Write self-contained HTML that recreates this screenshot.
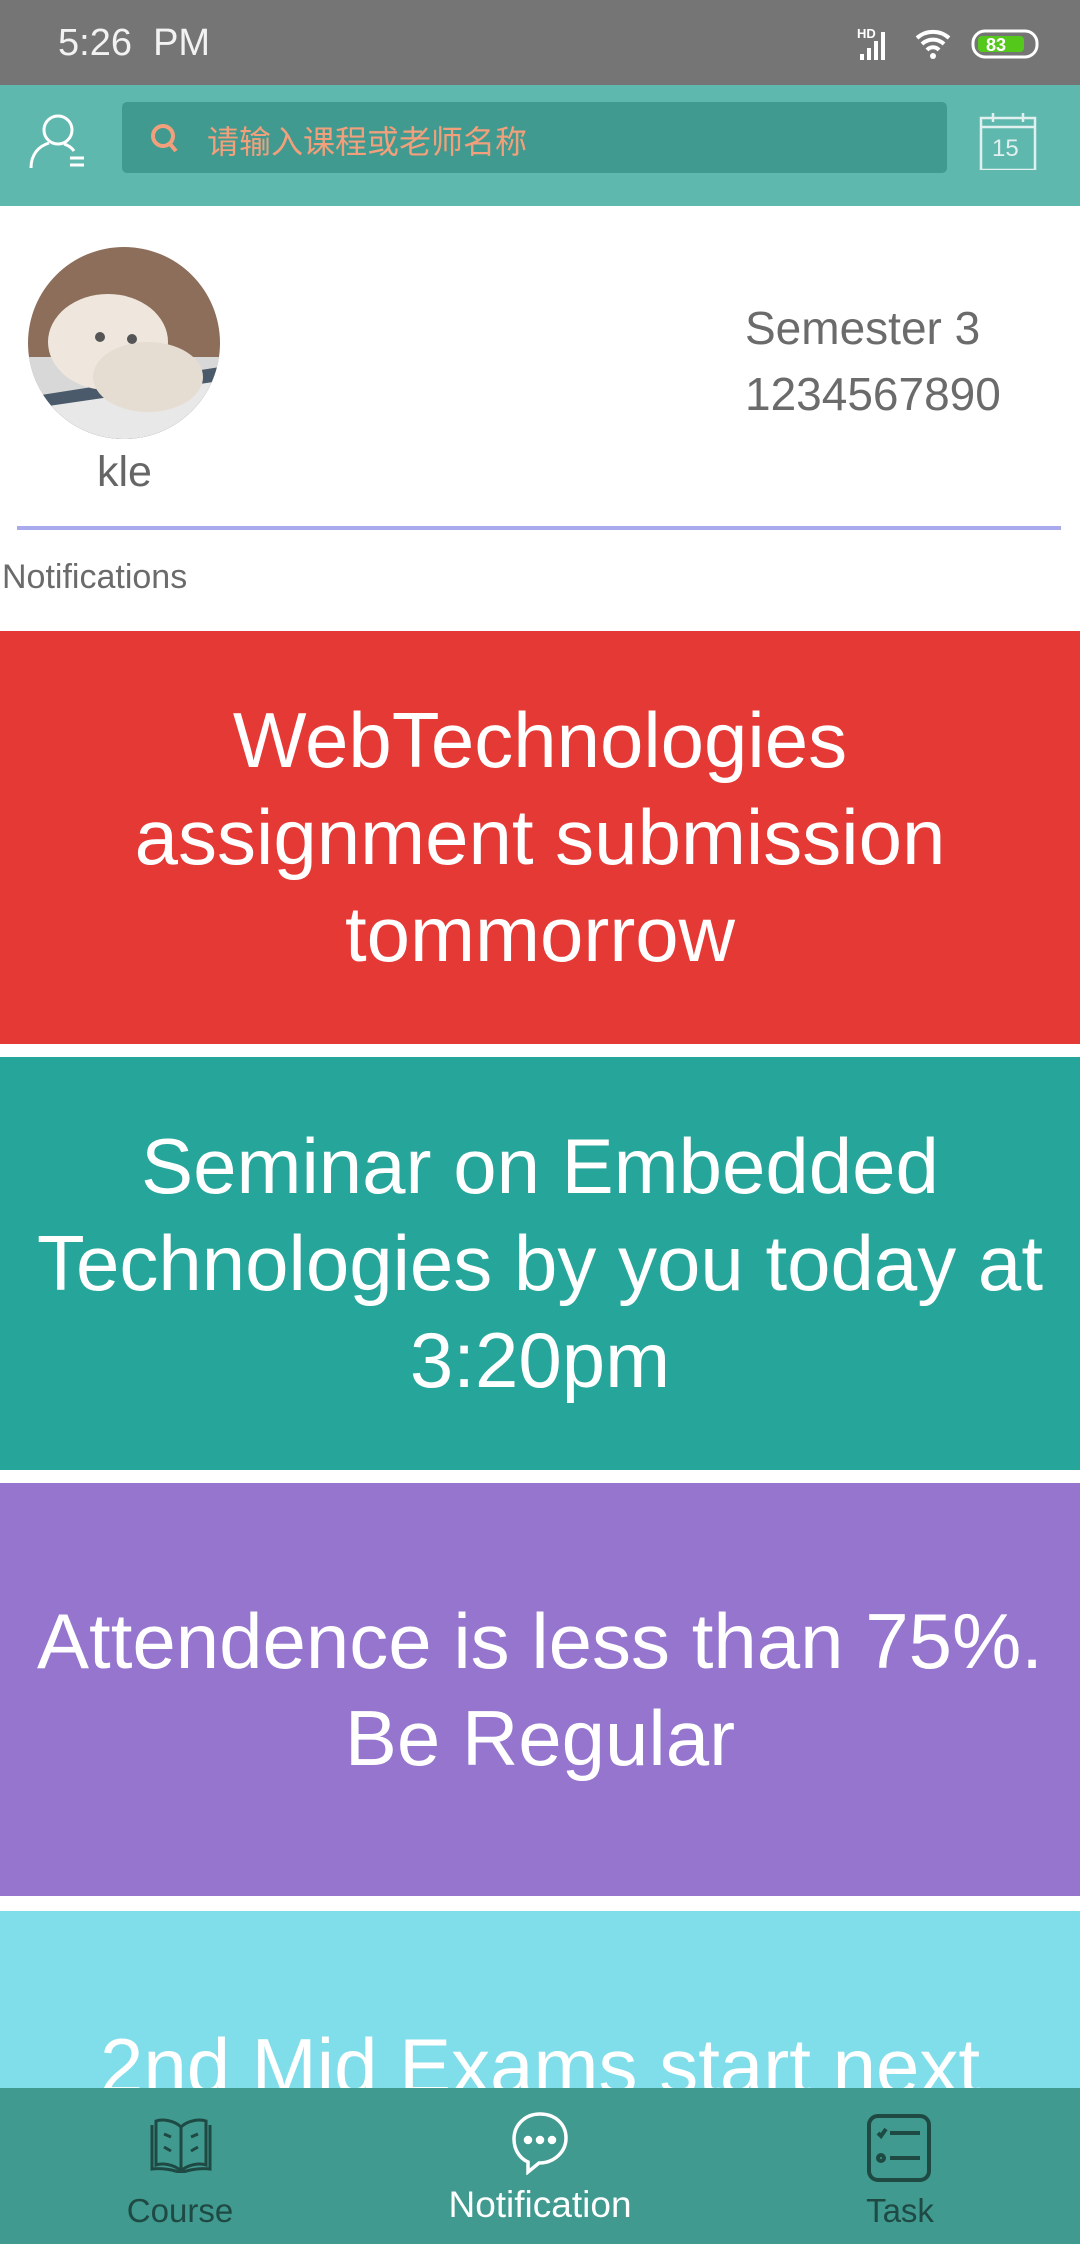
<!DOCTYPE html>
<html style="width:1080px;height:2244px;overflow:hidden"><head><meta charset="utf-8"><style>
*{margin:0;padding:0;box-sizing:border-box}
body{width:1080px;height:2244px;overflow:hidden;background:#fff;font-family:"Liberation Sans","Noto Sans CJK SC",sans-serif}
#w{position:relative;width:1080px;height:2244px;overflow:hidden}
.abs{position:absolute}
.card{position:absolute;left:0;width:1080px;height:413px;display:flex;align-items:center;justify-content:center;text-align:center;color:#fff;font-size:78px;line-height:97px}
</style></head><body><div id="w">
<div class="abs" style="top:0;left:0;width:1080px;height:85px;background:#757575"></div>
<div class="abs" style="top:22px;left:58px;color:#f2f2f2;font-size:38px">5:26&nbsp; PM</div>
<svg class="abs" style="left:855px;top:24px" width="190" height="40" viewBox="0 0 190 40">
<text x="2" y="14" fill="#fff" font-size="13" font-weight="bold" font-family="Liberation Sans">HD</text>
<rect x="5" y="30" width="4" height="6" fill="#fff"/><rect x="12" y="24" width="4" height="12" fill="#fff"/><rect x="19" y="17" width="4" height="19" fill="#fff"/><rect x="26" y="8" width="4" height="28" fill="#fff"/>
<path d="M62 14a24 24 0 0 1 32 0M67 20a16 16 0 0 1 22 0M72 26a8 8 0 0 1 12 0" stroke="#fff" stroke-width="4" fill="none"/><circle cx="78" cy="32" r="3" fill="#fff"/>
<rect x="118" y="7" width="64" height="26" rx="12" fill="none" stroke="#fff" stroke-width="3"/>
<rect x="123" y="12" width="46" height="16" rx="4" fill="#55c81c"/>
<text x="131" y="27" fill="#fff" font-size="18" font-weight="bold" font-family="Liberation Sans">83</text>
</svg>
<div class="abs" style="top:85px;left:0;width:1080px;height:121px;background:#5fb8ae"></div>
<svg class="abs" style="left:28px;top:110px" width="66" height="60" viewBox="0 0 66 60">
<circle cx="30" cy="20" r="14" fill="none" stroke="#fff" stroke-width="3"/>
<path d="M3 58c0-14 8-22 18-25M36 34c4 1 8 4 10 7" fill="none" stroke="#fff" stroke-width="3"/>
<path d="M42 48h14M42 55h14" stroke="#fff" stroke-width="3"/>
</svg>
<div class="abs" style="left:122px;top:102px;width:825px;height:71px;background:#409a90;border-radius:5px"></div>
<svg class="abs" style="left:149px;top:122px" width="32" height="34" viewBox="0 0 32 34"><circle cx="14" cy="14" r="10" fill="none" stroke="#f2a07b" stroke-width="4"/><path d="M21 22l6 7" stroke="#f2a07b" stroke-width="4"/></svg>
<div class="abs" style="left:207px;top:117px;color:#f2a07b;font-size:32px;font-family:'Noto Sans CJK SC',sans-serif">请输入课程或老师名称</div>
<svg class="abs" style="left:978px;top:110px" width="60" height="60" viewBox="0 0 60 60" fill="none" stroke="#e0f0ee" stroke-width="2.5">
<path d="M3 60V8h54v52zM3 17h54M15 3v9M45 3v9M22 8h16"/>
<text x="14" y="46" fill="#e0f0ee" stroke="none" font-size="24" font-family="Liberation Sans">15</text>
</svg>
<svg class="abs" style="left:28px;top:247px" width="192" height="192" viewBox="0 0 192 192">
<defs><clipPath id="c"><circle cx="96" cy="96" r="96"/></clipPath></defs>
<g clip-path="url(#c)"><rect width="192" height="192" fill="#8c6e5a"/><rect y="110" width="192" height="82" fill="#d8d8d8"/>
<path d="M0 150l192-30v72H0z" fill="#4a5a6a"/><path d="M0 162l192-28v58H0z" fill="#e8e8e8"/>
<ellipse cx="80" cy="95" rx="60" ry="48" fill="#efe7de"/><ellipse cx="120" cy="130" rx="55" ry="35" fill="#e6ddd2"/>
<circle cx="72" cy="90" r="5" fill="#555"/><circle cx="104" cy="92" r="5" fill="#555"/></g>
</svg>
<div class="abs" style="left:97px;top:448px;color:#666;font-size:43px">kle</div>
<div class="abs" style="left:745px;top:295px;color:#6b6b6b;font-size:46px;line-height:66px">Semester 3<br>1234567890</div>
<div class="abs" style="left:17px;top:526px;width:1044px;height:4px;background:#a9a9ee"></div>
<div class="abs" style="left:2px;top:558px;color:#6b6b6b;font-size:34px">Notifications</div>
<div class="card" style="top:631px;background:#e53935">WebTechnologies<br>assignment submission<br>tommorrow</div>
<div class="card" style="top:1057px;background:#26a69a">Seminar on Embedded<br>Technologies by you today at<br>3:20pm</div>
<div class="card" style="top:1483px;background:#9575cd">Attendence is less than 75%.<br>Be Regular</div>
<div class="card" style="top:1911px;height:177px;background:#80deea;align-items:flex-start;padding-top:107px;overflow:hidden">2nd Mid Exams start next</div>
<div class="abs" style="left:0;top:2088px;width:1080px;height:156px;background:#409a90"></div>
<svg class="abs" style="left:150px;top:2117px" width="62" height="56" viewBox="0 0 62 56" fill="none" stroke="#1f4a44" stroke-width="3">
<path d="M31 10C24 3 12 2 6 4v44c6-2 18-1 25 6 7-7 19-8 25-6V4C50 2 38 3 31 10v44"/>
<path d="M2 8v44c8-1 20 0 29 4M60 8v44c-8-1-20 0-29 4"/>
<path d="M14 17l7 3M14 30l7 4M48 17l-7 3M48 30l-7 4"/>
</svg>
<div class="abs" style="left:0;width:360px;top:2192px;text-align:center;color:#1f4a44;font-size:33px">Course</div>
<svg class="abs" style="left:510px;top:2111px" width="60" height="64" viewBox="0 0 60 64" fill="none" stroke="#fff" stroke-width="3.5">
<path d="M30 3C15 3 4 14 4 28c0 12 7 20 14 23v10l11-9c15 0 27-11 27-25S45 3 30 3z"/>
<circle cx="18" cy="29" r="2.5" fill="#fff"/><circle cx="30" cy="29" r="2.5" fill="#fff"/><circle cx="42" cy="29" r="2.5" fill="#fff"/>
</svg>
<div class="abs" style="left:360px;width:360px;top:2184px;text-align:center;color:#fff;font-size:37px">Notification</div>
<svg class="abs" style="left:866px;top:2113px" width="66" height="70" viewBox="0 0 66 70" fill="none" stroke="#1f4a44" stroke-width="4">
<rect x="3" y="3" width="60" height="64" rx="9"/>
<path d="M12 20l3 3 5-7M24 20h30M24 45h30"/><circle cx="15" cy="45" r="3"/>
</svg>
<div class="abs" style="left:720px;width:360px;top:2192px;text-align:center;color:#1f4a44;font-size:33px">Task</div>
</div></body></html>
